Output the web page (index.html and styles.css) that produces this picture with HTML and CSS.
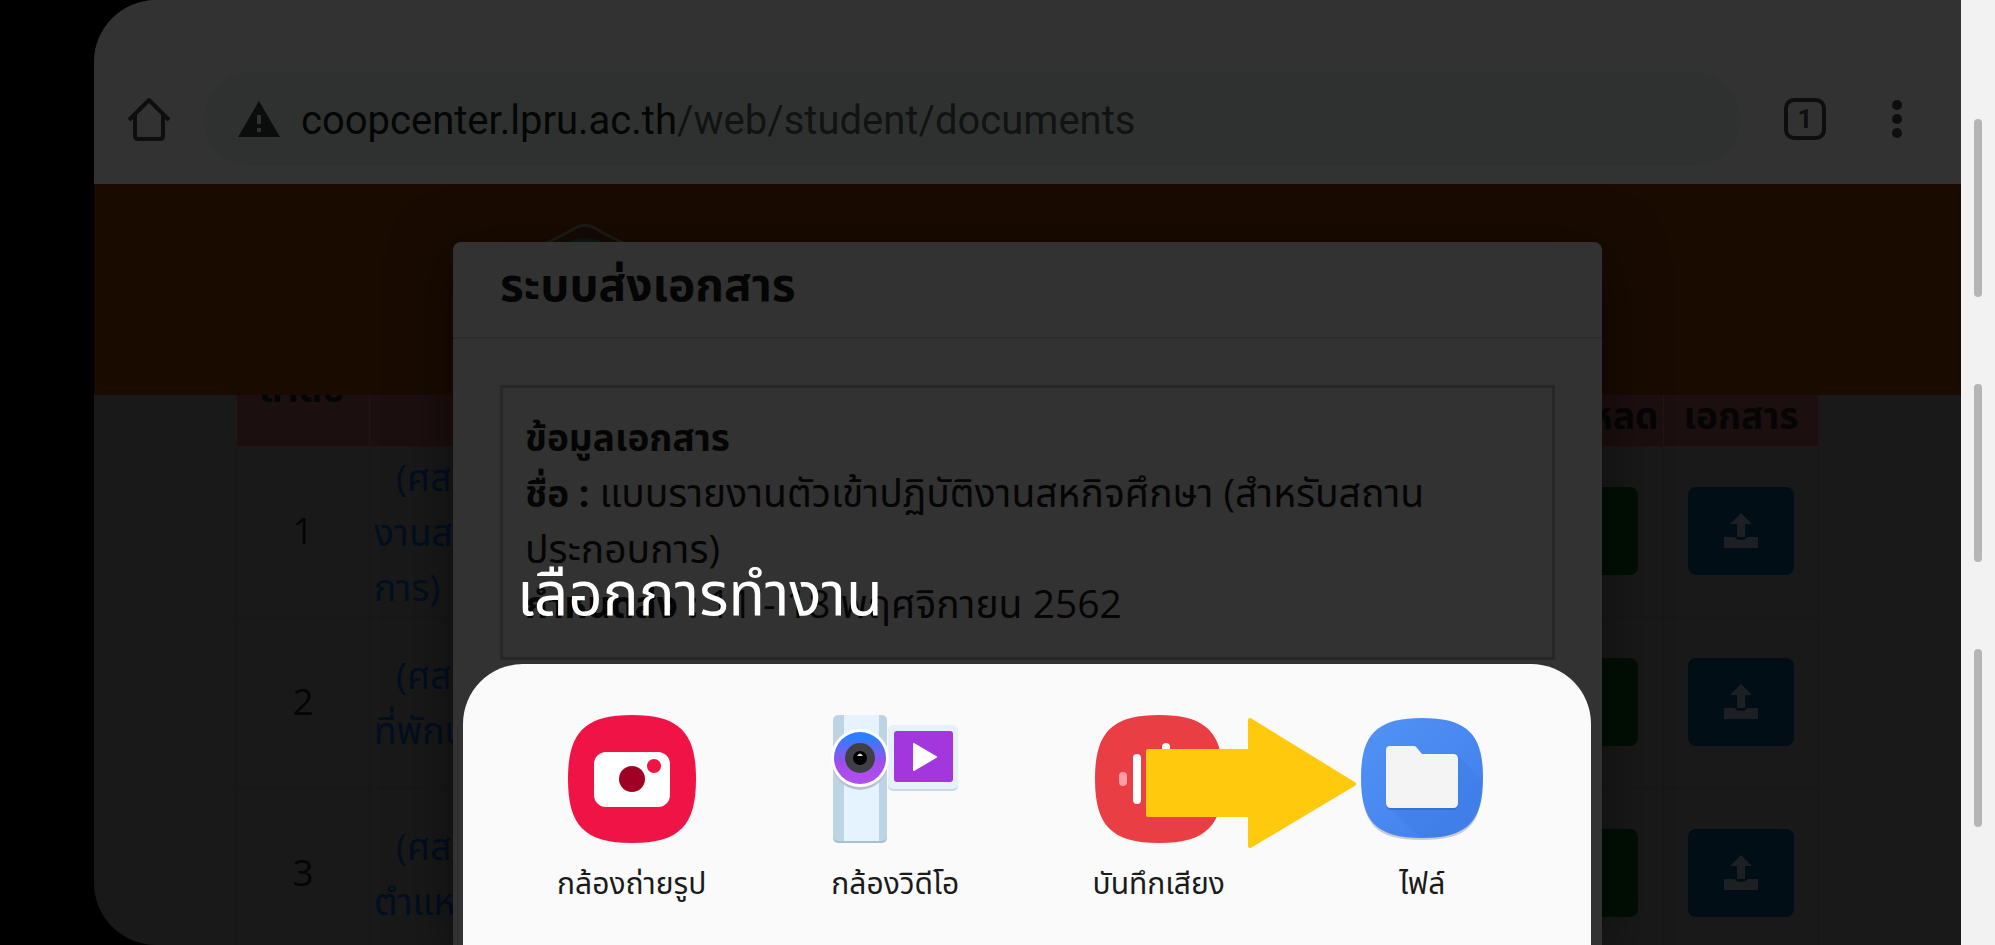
FILE: index.html
```html
<!DOCTYPE html>
<html lang="th">
<head>
<meta charset="utf-8">
<title>ระบบส่งเอกสาร</title>
<link rel="stylesheet" href="styles.css">
</head>
<body>
<svg class="defs" width="0" height="0" aria-hidden="true">
  <symbol id="upload" viewBox="0 0 36 36">
    <path d="M18 0 29 11H22V24H14V11H7Z"/>
    <path d="M1 24H12Q13 27 18 27T24 24H35V35H1Z"/>
  </symbol>
</svg>
<main class="device">
  <div class="screen">
    <header class="toolbar">
      <button class="tool" aria-label="Home"><svg width="44" height="44" viewBox="0 0 44 44"><path d="M2 23 22 3 42 23M8 18V39Q8 42 11 42H33Q36 42 36 39V18" fill="none" stroke="#0e0e0e" stroke-width="4" stroke-linejoin="round"/></svg></button>
      <div class="address">
        <svg width="42" height="36" viewBox="0 0 42 36"><path d="M21 0 42 36H0Z" fill="#0b0d0c"/><path d="M21 14V23M21 27V31" stroke="#303231" stroke-width="4"/></svg>
        <a class="url" href="#"><b>coopcenter.lpru.ac.th</b>/web/student/documents</a>
      </div>
      <button class="tool" aria-label="Tabs"><span class="tabs">1</span></button>
      <button class="tool" aria-label="Menu"><svg width="12" height="40" viewBox="0 0 12 40" fill="#0e0e0e"><circle cx="6" cy="6" r="5"/><circle cx="6" cy="20" r="5"/><circle cx="6" cy="34" r="5"/></svg></button>
    </header>
    <div class="banner"></div>
    <table class="docs">
      <thead><tr><th class="c-num">ลำดับ</th><th></th><th class="c-down">ดาวน์โหลด</th><th class="c-send">ส่ง<br>เอกสาร</th></tr></thead>
      <tbody>
        <tr><td class="num">1</td><td class="name"><a href="#"><span class="code">(ศส</span>งานส<br>การ)</a></td><td class="act"><button class="down" aria-label="ดาวน์โหลด"></button></td><td class="act"><button class="up" aria-label="ส่ง"><svg width="36" height="36"><use href="#upload"/></svg></button></td></tr>
        <tr><td class="num">2</td><td class="name"><a href="#"><span class="code">(ศส</span>ที่พักน</a></td><td class="act"><button class="down" aria-label="ดาวน์โหลด"></button></td><td class="act"><button class="up" aria-label="ส่ง"><svg width="36" height="36"><use href="#upload"/></svg></button></td></tr>
        <tr><td class="num">3</td><td class="name"><a href="#"><span class="code">(ศส</span>ตำแห</a></td><td class="act"><button class="down" aria-label="ดาวน์โหลด"></button></td><td class="act"><button class="up" aria-label="ส่ง"><svg width="36" height="36"><use href="#upload"/></svg></button></td></tr>
      </tbody>
    </table>
    <svg class="crest" width="96" height="60" viewBox="0 0 96 60"><path d="M2 22Q22 14 38 4Q48-1 58 4Q74 14 94 22V60H2Z" fill="#160b05" stroke="#1c1c18" stroke-width="3"/><path d="M20 24Q48 4 76 24Z" fill="#101916"/></svg>
    <section class="modal">
      <h1 class="modal-title">ระบบส่งเอกสาร</h1>
      <div class="info">
        <b>ข้อมูลเอกสาร</b><br>
        <b>ชื่อ :</b> แบบรายงานตัวเข้าปฏิบัติงานสหกิจศึกษา (สำหรับสถาน<br>ประกอบการ)<br>
        <b>กำหนดส่ง :</b> 11 - 18 พฤศจิกายน 2562
      </div>
    </section>
    <section class="chooser">
      <h2 class="chooser-title">เลือกการทำงาน</h2>
      <div class="sheet">
        <button class="app">
          <svg width="128" height="128" viewBox="0 0 128 128"><path d="M64 0C112 0 128 18 128 64S112 128 64 128 0 110 0 64 16 0 64 0Z" fill="#f01446"/><rect x="26" y="37" width="76" height="55" rx="12" fill="#fff"/><circle cx="64" cy="64" r="13" fill="#a00023"/><circle cx="86" cy="51" r="7" fill="#f01446"/></svg>
          <span>กล้องถ่ายรูป</span>
        </button>
        <button class="app">
          <svg width="128" height="128" viewBox="0 0 128 128"><defs><linearGradient id="lens" x2="0" y2="1"><stop offset=".1" stop-color="#2a80ff"/><stop offset=".6" stop-color="#a14dea"/><stop offset="1" stop-color="#b44fee"/></linearGradient></defs><rect x="2" y="2" width="54" height="126" rx="5" fill="#a9bfce"/><rect x="2" y="0" width="54" height="126" rx="5" fill="#bcd4e4"/><path d="M13 0H48V126H13Z" fill="#e4f3ff"/><rect x="57" y="12" width="70" height="64" rx="5" fill="#ccd9e3"/><rect x="57" y="10" width="70" height="64" rx="5" fill="#e6f1fa"/><rect x="63" y="16" width="59" height="51" rx="3" fill="#a336dc"/><path d="M83 29V55L105 42Z" fill="#fff" stroke="#fff" stroke-width="2" stroke-linejoin="round"/><circle cx="29" cy="47" r="28" fill="#b5c3cf"/><circle cx="29" cy="43" r="29" fill="#fff"/><circle cx="29" cy="43" r="26" fill="url(#lens)"/><circle cx="29" cy="43" r="15" fill="#404044"/><circle cx="29" cy="43" r="7" fill="#000"/><path d="M26 41Q29 36 32 41Z" fill="#ddd"/></svg>
          <span>กล้องวิดีโอ</span>
        </button>
        <button class="app">
          <svg width="128" height="128" viewBox="0 0 128 128"><path d="M64 0C112 0 128 18 128 64S112 128 64 128 0 110 0 64 16 0 64 0Z" fill="#e93e43"/><g stroke="#fff" stroke-width="8" stroke-linecap="round"><path d="M28 61V67" stroke="#ff9fa3"/><path d="M42 43V85M56 52V76M71 32V96M86 46V82"/></g></svg>
          <span>บันทึกเสียง</span>
        </button>
        <button class="app">
          <svg width="128" height="128" viewBox="0 0 128 128"><defs><linearGradient id="blue" x2="1" y2="1"><stop stop-color="#5293f5"/><stop offset="1" stop-color="#3f7eec"/></linearGradient></defs><path d="M64 5C110 5 124 22 124 66S110 125 64 125 4 110 4 66 18 5 64 5Z" fill="#c9cbd0"/><path d="M64 3C110 3 125 20 125 63S110 123 64 123 3 106 3 63 18 3 64 3Z" fill="url(#blue)"/><path d="M100 40 124 66Q123 105 96 118 80 124 62 122L30 92Z" fill="#3b78dd" opacity=".3"/><path d="M32 33H58L64 41H95Q100 41 100 46V90Q100 95 95 95H33Q28 95 28 90V37Q28 33 32 33Z" fill="#2f68c8" opacity=".6"/><path d="M32 31H56Q58 31 59 33L64 39H95Q100 39 100 44V88Q100 93 95 93H33Q28 93 28 88V35Q28 31 32 31Z" fill="#f4f4f4"/></svg>
          <span>ไฟล์</span>
        </button>
        <svg class="arrow" width="212" height="132" viewBox="0 0 212 132"><path d="M3 34H105V3L209 67 105 129V98H3Z" fill="#ffc90e" stroke="#ffc90e" stroke-width="4" stroke-linejoin="round"/></svg>
      </div>
    </section>
  </div>
  <aside class="edge"><i></i><i></i><i></i></aside>
</main>
</body>
</html>
```
FILE: styles.css
```css
* { box-sizing: border-box; }
body {
  margin: 0;
  background: #000;
  color: #050505;
  font-family: "Open Sans", "Noto Sans Thai", "Noto Sans", sans-serif;
}
button { border: 0; padding: 0; margin: 0; background: none; font: inherit; color: inherit; }
a { color: inherit; text-decoration: none; }
.defs { position: absolute; }
.device { display: flex; height: 100vh; padding-left: 94px; overflow: hidden; }
.screen {
  position: relative;
  flex: 1;
  min-width: 0;
  overflow: hidden;
  background: #191919;
  border-radius: 62px 0 0 62px;
}
.edge {
  width: 34px;
  padding-top: 119px;
  background: #f2f2f2;
  display: flex;
  flex-direction: column;
  align-items: center;
  gap: 87px;
}
.edge i { width: 8px; height: 178px; flex: none; border-radius: 4px; background: #b5b5b5; }

.toolbar {
  position: relative;
  z-index: 2;
  display: flex;
  align-items: center;
  height: 184px;
  padding: 54px 41px 0 32px;
  background: #323232;
}
.tool { display: flex; justify-content: center; width: 46px; }
.address {
  display: flex;
  align-items: center;
  flex: 1;
  height: 94px;
  margin: 0 42px 0 32px;
  padding-left: 34px;
  gap: 21px;
  border-radius: 47px;
  background: #2f3130;
}
.address svg { flex: none; }
.url { padding-top: 4px; font: 40px/50px Roboto, sans-serif; color: #111312; white-space: nowrap; }
.url b { font-weight: 400; color: #040505; }
.tabs {
  width: 42px;
  height: 42px;
  border: 4px solid #0e0e0e;
  border-radius: 10px;
  font: 700 26px/34px Roboto, sans-serif;
  color: #0e0e0e;
}
.tool:last-child { margin-left: 46px; }

.banner { position: relative; z-index: 1; height: 211px; background: #190b00; }

.docs {
  width: calc(100% - 284px);
  margin: -68px auto 0 142px;
  border-collapse: collapse;
  table-layout: fixed;
  font-size: 37px;
  line-height: 55px;
}
.docs th { height: 118px; padding: 4px; background: #1c0f0f; border: 1px solid #211616; font-weight: 700; }
.docs td { height: 171px; padding: 0 4px 2px; border: 1px solid #161616; }
.docs .c-num { width: 133px; }
.docs .c-down { width: 174px; vertical-align: bottom; }
.docs .c-send { width: 155px; }
.num, .act { text-align: center; }
.docs .num { padding-bottom: 6px; }
.name { color: #020f20; white-space: nowrap; }
.code { display: block; padding-left: 22px; }
.up, .down { display: inline-flex; align-items: center; justify-content: center; width: 106px; height: 88px; border-radius: 8px; vertical-align: middle; }
.up { background: #010e16; fill: #1c2022; }
.down { width: 122px; background: #020f04; }

.crest { position: absolute; z-index: 2; top: 224px; left: 443px; }
.modal {
  position: absolute;
  z-index: 3;
  top: 242px;
  bottom: 0;
  left: 359px;
  right: 359px;
  background: #323232;
  border-radius: 8px 8px 0 0;
  box-shadow: 0 12px 60px rgba(0, 0, 0, .5);
}
.modal-title { margin: 0; padding: 14px 47px 26px; border-bottom: 2px solid #2c2c2c; font-size: 46px; line-height: 55px; }
.info {
  margin: 46px 47px 0;
  padding: 20px 22px 26px;
  border: 3px solid #272727;
  font-size: 39px;
  line-height: 55px;
  white-space: nowrap;
}
.info b { font-size: 37px; }

.chooser { position: absolute; z-index: 4; left: 369px; right: 370px; bottom: 0; }
.chooser-title { margin: 0; padding: 0 54px 32px; font-size: 60px; font-weight: 400; line-height: 80px; color: #fff; }
.sheet {
  position: relative;
  display: grid;
  grid-template-columns: repeat(4, 1fr);
  height: 281px;
  padding: 51px 37px 0;
  background: #fafafa;
  border-radius: 60px 60px 0 0;
}
.app { display: flex; flex-direction: column; align-items: center; gap: 18px; color: #1b1b1b; font-size: 30px; line-height: 44px; }
.arrow { position: absolute; top: 53px; right: 234px; }
```
